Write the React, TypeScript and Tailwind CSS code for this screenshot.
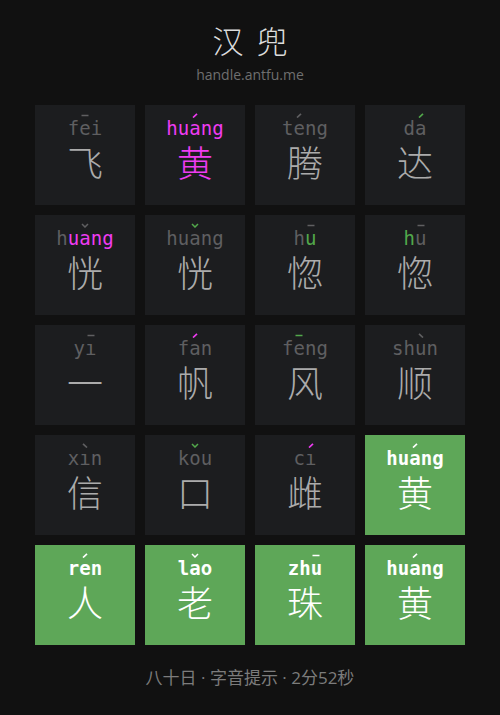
import React from "react";

type Col = "g" | "m" | "n" | "w";
type L = { c: string; col: Col; tone?: 1 | 2 | 3 | 4; tc?: Col };
type Tile = { letters: L[]; ch: string; chCol: "g" | "m" | "w"; ok?: boolean };

const colorClass: Record<Col, string> = {
  g: "text-[#5f5f61]",
  m: "text-[#ef3cf2]",
  n: "text-[#52a84b]",
  w: "text-white",
};
const strokeColor: Record<Col, string> = {
  g: "#5f5f61",
  m: "#ef3cf2",
  n: "#52a84b",
  w: "#ffffff",
};

function mk(s: string, col: Col, toneIdx: number, tone: 1 | 2 | 3 | 4, tc: Col, over?: Record<number, Col>): L[] {
  return s.split("").map((c, i) => ({
    c,
    col: over && over[i] ? over[i] : col,
    tone: i === toneIdx ? tone : undefined,
    tc: i === toneIdx ? tc : undefined,
  }));
}

const tiles: Tile[] = [
  { letters: mk("fei", "g", 1, 1, "g"), ch: "飞", chCol: "g" },
  { letters: mk("huang", "m", 2, 2, "m"), ch: "黄", chCol: "m" },
  { letters: mk("teng", "g", 1, 2, "g"), ch: "腾", chCol: "g" },
  { letters: mk("da", "g", 1, 2, "n"), ch: "达", chCol: "g" },

  { letters: mk("huang", "m", 2, 3, "g", { 0: "g" }), ch: "恍", chCol: "g" },
  { letters: mk("huang", "g", 2, 3, "n"), ch: "恍", chCol: "g" },
  { letters: mk("hu", "g", 1, 1, "g", { 1: "n" }), ch: "惚", chCol: "g" },
  { letters: mk("hu", "g", 1, 1, "g", { 0: "n" }), ch: "惚", chCol: "g" },

  { letters: mk("yı", "g", 1, 1, "g"), ch: "一", chCol: "g" },
  { letters: mk("fan", "g", 1, 2, "m"), ch: "帆", chCol: "g" },
  { letters: mk("feng", "g", 1, 1, "n"), ch: "风", chCol: "g" },
  { letters: mk("shun", "g", 2, 4, "g"), ch: "顺", chCol: "g" },

  { letters: mk("xın", "g", 1, 4, "g"), ch: "信", chCol: "g" },
  { letters: mk("kou", "g", 1, 3, "n"), ch: "口", chCol: "g" },
  { letters: mk("cı", "g", 1, 2, "m"), ch: "雌", chCol: "g" },
  { letters: mk("huang", "w", 2, 2, "w"), ch: "黄", chCol: "w", ok: true },

  { letters: mk("ren", "w", 1, 2, "w"), ch: "人", chCol: "w", ok: true },
  { letters: mk("lao", "w", 1, 3, "w"), ch: "老", chCol: "w", ok: true },
  { letters: mk("zhu", "w", 2, 1, "w"), ch: "珠", chCol: "w", ok: true },
  { letters: mk("huang", "w", 2, 2, "w"), ch: "黄", chCol: "w", ok: true },
];

function ToneMark({ tone, col }: { tone: 1 | 2 | 3 | 4; col: Col }) {
  const s = strokeColor[col];
  let el: React.ReactNode = null;
  if (tone === 1) el = <line x1="1" y1="2.5" x2="8" y2="2.5" stroke={s} strokeWidth="1.7" />;
  if (tone === 2) el = <line x1="2.5" y1="4.5" x2="6.5" y2="0.8" stroke={s} strokeWidth="1.7" />;
  if (tone === 3) el = <polyline points="1.5,1 4.5,4 7.5,1" fill="none" stroke={s} strokeWidth="1.5" />;
  if (tone === 4) el = <line x1="2.5" y1="0.8" x2="6.5" y2="4.5" stroke={s} strokeWidth="1.7" />;
  return (
    <svg
      width="9"
      height="5"
      viewBox="0 0 9 5"
      className="absolute top-[-4px] left-1/2 -translate-x-1/2"
    >
      {el}
    </svg>
  );
}

function TileView({ t }: { t: Tile }) {
  const ch =
    t.chCol === "m" ? "text-[#ef3cf2]" : t.chCol === "w" ? "text-white" : "text-[#ababab]";
  return (
    <div
      className={`w-[100px] h-[100px] flex flex-col items-center pt-[12px] ${
        t.ok ? "bg-[#5ea758]" : "bg-[#1c1d1f]"
      }`}
    >
      <div
        className="flex h-[22px] leading-[22px] text-[19px]"
        style={{ fontFamily: "'DejaVu Sans Mono', monospace" }}
      >
        {t.letters.map((l, i) => (
          <span key={i} className={`relative inline-block ${colorClass[l.col]} ${t.ok ? "font-bold" : ""}`}>
            {l.c}
            {l.tone && <ToneMark tone={l.tone} col={l.tc || l.col} />}
          </span>
        ))}
      </div>
      <div
        className={`text-[36px] leading-[44px] font-light ${ch}`}
        style={{ fontFamily: "'Noto Sans CJK SC', sans-serif" }}
      >
        {t.ch}
      </div>
    </div>
  );
}

export default function App() {
  return (
    <div className="w-[500px] h-[715px] bg-[#111111] flex flex-col items-center pt-[20px]">
      <div
        className="flex gap-[13px] text-[31px] leading-[40px] font-light text-[#dcdcdc]"
        style={{ fontFamily: "'Noto Sans CJK SC', sans-serif" }}
      >
        <span>汉</span>
        <span>兜</span>
      </div>
      <div
        className="mt-[5px] text-[14px] leading-[20px] text-[#6f6f6f]"
        style={{ fontFamily: "'Open Sans', sans-serif" }}
      >
        handle.antfu.me
      </div>
      <div className="mt-[20px] grid grid-cols-4 gap-[10px]">
        {tiles.map((t, i) => (
          <TileView key={i} t={t} />
        ))}
      </div>
      <div
        className="mt-[21px] text-[17px] leading-[24px] text-[#7c7c7c]"
        style={{ fontFamily: "'Open Sans', 'Noto Sans CJK SC', sans-serif" }}
      >
        八十日 · 字音提示 · 2分52秒
      </div>
    </div>
  );
}
